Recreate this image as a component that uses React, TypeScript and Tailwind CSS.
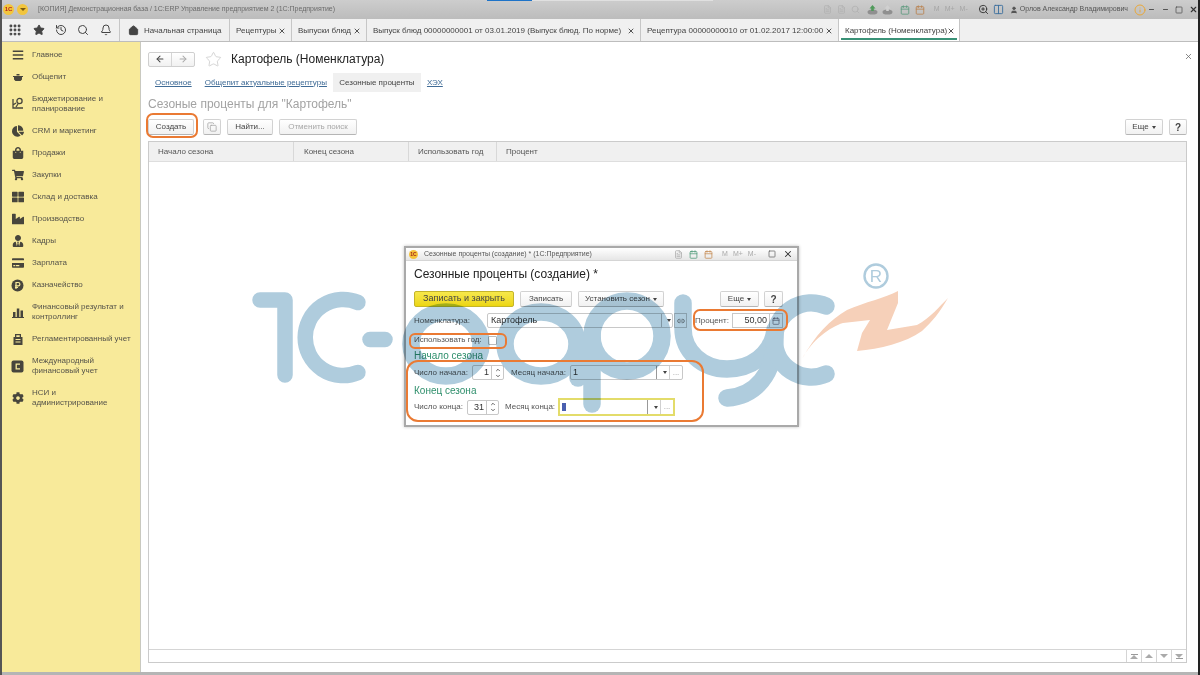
import { ReactNode } from 'react';
import { Bell, Calendar, ChevronDown, ChevronUp, Copy, FileText, History, House, Link2, Minus, Search, Square, Star, X, ArrowLeft, ArrowRight, Grip, Info, User, ZoomIn, Columns2 } from 'lucide-react';
import { FaBars, FaChartPie, FaCog, FaCreditCard, FaIndustry, FaShoppingBag, FaShoppingCart, FaThLarge, FaUserTie } from 'react-icons/fa';

const PotIcon = () => (
    <svg width="12" height="12" viewBox="0 0 12 12" fill="currentColor">
        <path d="M1 5h10v1H10v2.5L8.5 10h-5L2 8.5V6H1z" />
        <rect x="4.5" y="3" width="3" height="1.5" />
    </svg>
);

const BudgetIcon = () => (
    <svg width="14" height="14" viewBox="0 0 14 14" fill="none" stroke="currentColor" strokeWidth="1.3">
        <path d="M2 2v9h10M2 8l3-2" />
        <circle cx="8.5" cy="4" r="2.6" />
        <path d="M5 10l2-3" />
    </svg>
);

const RubleIcon = () => (
    <svg width="13" height="13" viewBox="0 0 13 13">
        <circle cx="6.5" cy="6.5" r="6" fill="currentColor" />
        <path d="M5 10V3.5h2.2a1.6 1.6 0 010 3.4H4M4 8.5h3" fill="none" stroke="#f8ea9a" strokeWidth="1.2" />
    </svg>
);

const BarsIcon = () => (
    <svg width="12" height="12" viewBox="0 0 12 12" fill="currentColor">
        <rect x="1" y="6" width="2.5" height="5" />
        <rect x="4.8" y="2.5" width="2.5" height="8.5" />
        <rect x="8.5" y="4.5" width="2.5" height="6.5" />
        <rect x="0" y="11" width="12" height="1" />
    </svg>
);

const ReportIcon = () => (
    <svg width="12" height="13" viewBox="0 0 12 13" fill="currentColor">
        <path d="M3 1h6v3h1.5v8h-9V4H3zM4.3 2.2V4h3.4V2.2z" fillRule="evenodd" />
        <rect x="3.5" y="6" width="5" height="1" fill="#f8ea9a" />
        <rect x="3.5" y="8.5" width="5" height="1" fill="#f8ea9a" />
    </svg>
);

const IntlIcon = () => (
    <svg width="13" height="13" viewBox="0 0 13 13">
        <rect x="0.5" y="0.5" width="12" height="12" rx="2" fill="currentColor" />
        <path d="M9 4.2H5.2v4.6H9" fill="none" stroke="#f8ea9a" strokeWidth="1.3" />
    </svg>
);

// серая горка с зелёной стрелкой, панель в заголовке
const TrayIcon = ({ arrow }: { arrow: string }) => (
    <svg width="11" height="11" viewBox="0 0 11 11">
        <ellipse cx="5.5" cy="8" rx="5" ry="2.6" fill="#8f8f8f" />
        <path d="M5.5 1L8.5 4.5H6.8V7H4.2V4.5H2.5z" fill={arrow} />
    </svg>
);

const menuItems: { label: ReactNode; icon: ReactNode; double?: boolean }[] = [
    { label: 'Главное', icon: <FaBars size={12} /> },
    { label: 'Общепит', icon: <PotIcon /> },
    { label: <>Бюджетирование и<br />планирование</>, icon: <BudgetIcon />, double: true },
    { label: 'CRM и маркетинг', icon: <FaChartPie size={12} /> },
    { label: 'Продажи', icon: <FaShoppingBag size={12} /> },
    { label: 'Закупки', icon: <FaShoppingCart size={12} /> },
    { label: 'Склад и доставка', icon: <FaThLarge size={12} /> },
    { label: 'Производство', icon: <FaIndustry size={12} /> },
    { label: 'Кадры', icon: <FaUserTie size={12} /> },
    { label: 'Зарплата', icon: <FaCreditCard size={12} /> },
    { label: 'Казначейство', icon: <RubleIcon /> },
    { label: <>Финансовый результат и<br />контроллинг</>, icon: <BarsIcon />, double: true },
    { label: 'Регламентированный учет', icon: <ReportIcon /> },
    { label: <>Международный<br />финансовый учет</>, icon: <IntlIcon />, double: true },
    { label: <>НСИ и<br />администрирование</>, icon: <FaCog size={12} />, double: true },
];

const Sidebar = () => (
    <aside className="w-[139px] ml-[2px] shrink-0 bg-[#f8ea9a] border-r border-[#c9c9c0] pt-[2px]">
        {menuItems.map((item, i) => (
            <div key={i} className={`flex items-center text-[#55534a] ${item.double ? 'h-[32px]' : 'h-[22px]'}`}>
                <span className="w-[30px] shrink-0 flex justify-center pl-px text-[#47453c]">{item.icon}</span>
                <span className="text-[8px] leading-[10.5px] whitespace-nowrap">{item.label}</span>
            </div>
        ))}
    </aside>
);

const Tab = ({ children, className, active }: { children: ReactNode; className: string; active?: boolean }) => (
    <div className={`h-full shrink-0 flex items-center justify-between pl-[6px] pr-[5px] pt-px border-r border-[#c6c6c6] text-[8px] text-[#444] relative whitespace-nowrap ${active ? 'bg-white' : ''} ${className}`}>
        {children}
        <X size={8} strokeWidth={3} className="text-[#555] shrink-0" />
        {active && <div className="absolute left-[2px] right-[2px] bottom-[1px] h-[2px] bg-[#3a9277]" />}
    </div>
);

const Btn = ({ children, className = '' }: { children: ReactNode; className?: string }) => (
    <div className={`h-[16px] shrink-0 flex items-center justify-center border border-[#d2d2d2] border-b-[#b5b5b5] rounded-[2px] bg-gradient-to-b from-white to-[#f1f1f1] text-[8px] text-[#444] whitespace-nowrap ${className}`}>
        {children}
    </div>
);

const Caret = () => <span className="inline-block ml-[3px] border-x-[2px] border-t-[3px] border-x-transparent border-t-[#444]" />;

const Label = ({ children, className = '' }: { children: ReactNode; className?: string }) => (
    <span className={`text-[8px] text-[#555] whitespace-nowrap shrink-0 ${className}`}>{children}</span>
);

const Spin = ({ value, className }: { value: string; className: string }) => (
    <div className={`h-[15px] flex border border-[#c8c8c8] rounded-[2px] bg-white shrink-0 ${className}`}>
        <span className="flex-1 text-right pr-[2px] text-[9px] leading-[13px] text-[#333]">{value}</span>
        <div className="w-[12px] border-l border-[#c8c8c8] flex flex-col items-center justify-center text-[#333]">
            <ChevronUp size={6} strokeWidth={3} />
            <ChevronDown size={6} strokeWidth={3} />
        </div>
    </div>
);

const MonthInput = ({ children, className }: { children?: ReactNode; className: string }) => (
    <div className={`flex items-center border shrink-0 ${className}`}>
        <span className="flex-1 pl-[2px] text-[9px] text-[#333] flex items-center">{children}</span>
        <span className="w-[13px] h-full border-l border-[#999] flex items-center justify-center"><Caret /></span>
        <span className="w-[13px] h-full border-l border-[#d0d0d0] text-[8px] leading-[13px] text-center text-[#999]">...</span>
    </div>
);

const SeasonDialog = () => (
    <div className="absolute left-[404px] top-[246px] w-[395px] h-[181px] border-2 border-[#a9a9a9] bg-white shadow-[0_0_3px_rgba(0,0,0,0.25)] z-10 flex flex-col">
        <div className="h-[13px] shrink-0 flex items-center bg-gradient-to-b from-[#ffffff] to-[#e6e6e6] border-b border-[#d5d5d5] text-[7px] text-[#555]">
            <span className="w-[9px] h-[9px] ml-[3px] rounded-full bg-[#f5c33b] text-[5px] leading-[9px] text-center font-bold text-[#a3261a]">1С</span>
            <span className="ml-[6px]">Сезонные проценты (создание) * (1С:Предприятие)</span>
            <div className="ml-auto flex items-center gap-[6px] pr-[4px] text-[#aaa]">
                <FileText size={9} />
                <Calendar size={9} className="text-[#4d9a78]" />
                <Calendar size={9} className="text-[#c48a52]" />
                <span className="text-[7px] w-[34px] ml-[3px] flex justify-between"><span>M</span><span>M+</span><span>M-</span></span>
                <Square size={8} className="ml-[6px] text-[#555]" strokeWidth={2} />
                <X size={10} className="ml-[1px] text-[#333]" strokeWidth={2.5} />
            </div>
        </div>
        <div className="px-[8px] flex-1">
            <h2 className="text-[12px] leading-[16px] mt-[5px] text-[#222] whitespace-nowrap">Сезонные проценты (создание) *</h2>
            <div className="flex gap-[6px] mt-[9px]">
                <div className="w-[100px] h-[16px] flex items-center justify-center rounded-[2px] border border-[#c4b52a] bg-gradient-to-b from-[#f7e84a] to-[#ecd60e] text-[9px] text-[#444]">Записать и закрыть</div>
                <Btn className="w-[52px]">Записать</Btn>
                <Btn className="w-[86px]">Установить сезон<Caret /></Btn>
                <Btn className="w-[39px] ml-auto mr-[-1px]">Еще<Caret /></Btn>
                <Btn className="w-[19px] mr-[6px] text-[10px] font-bold">?</Btn>
            </div>
            <div className="flex items-center h-[15px] mt-[6px]">
                <Label className="w-[73px]">Номенклатура:</Label>
                <div className="w-[186px] h-full flex items-center border border-[#c8c8c8] rounded-[2px] bg-white">
                    <span className="flex-1 pl-[3px] text-[9px] text-[#333]">Картофель</span>
                    <span className="w-[11px] h-full border-l border-[#bbb] flex items-center justify-center"><Caret /></span>
                </div>
                <div className="w-[13px] h-full ml-[1px] border border-[#c8c8c8] flex items-center justify-center text-[#555]"><Link2 size={8} /></div>
                <Label className="ml-[8px] w-[37px]">Процент:</Label>
                <div className="w-[51px] h-full flex items-center border border-[#c8c8c8] bg-white">
                    <span className="flex-1 text-right pr-[2px] text-[9px] text-[#333]">50,00</span>
                    <span className="w-[13px] h-full border-l border-[#c8c8c8] flex items-center justify-center text-[#667]"><Calendar size={8} /></span>
                </div>
            </div>
            <div className="flex items-center h-[10px] mt-[7px]">
                <Label className="w-[74px]">Использовать год:</Label>
                <span className="w-[9px] h-[9px] border border-[#bbb] rounded-[1px] bg-white" />
            </div>
            <div className="text-[10px] leading-[12px] text-[#2f8f6c] mt-[5px]">Начало сезона</div>
            <div className="flex items-center h-[15px] mt-[3px]">
                <Label className="w-[58px]">Число начала:</Label>
                <Spin value="1" className="w-[32px]" />
                <Label className="ml-[7px] w-[59px]">Месяц начала:</Label>
                <MonthInput className="w-[113px] h-full border-[#c8c8c8] rounded-[2px] bg-white">1</MonthInput>
            </div>
            <div className="text-[10px] leading-[12px] text-[#2f8f6c] mt-[5px]">Конец сезона</div>
            <div className="flex items-center h-[18px] mt-[1px]">
                <Label className="w-[53px]">Число конца:</Label>
                <Spin value="31" className="w-[32px]" />
                <Label className="ml-[6px] w-[53px]">Месяц конца:</Label>
                <MonthInput className="w-[117px] h-full border-[#e3dc6a] border-2 bg-white">
                    <span className="w-[4px] h-[8px] bg-[#4a5fb0]" />
                </MonthInput>
            </div>
        </div>
    </div>
);

// логотип поверх всего окна, как на записи экрана
const Watermark = () => (
    <svg className="absolute inset-0 z-20 pointer-events-none mix-blend-multiply" width="1200" height="675" viewBox="0 0 1200 675" fill="none">
        <g stroke="#afccdd" strokeWidth="15.5" strokeLinecap="round" strokeLinejoin="round">
            <path d="M260 300H285V375" />
            <path d="M358 302.5A38 38 0 1 0 358 372.5" />
            <path d="M370 339.5H385" />
        </g>
        <g stroke="#afccdd" strokeWidth="17.5" strokeLinecap="round" strokeLinejoin="round">
            <ellipse cx="446" cy="344" rx="35" ry="32" />
            <ellipse cx="541" cy="344" rx="36" ry="32" />
            <path d="M578 344V378" />
            <circle cx="627" cy="336" r="35" />
            <path d="M592 336V404" />
            <path d="M683 303V328C683 352 703 369 727 369C750 369 772 355 775 330" />
            <path d="M727 398C755 396 775 375 775 335" />
            <path d="M826 306A37 37 0 1 0 826 374" />
        </g>
        <circle cx="876" cy="276" r="11.5" stroke="#afccdd" strokeWidth="2.4" />
        <text x="876" y="282" textAnchor="middle" fontSize="17" fontFamily="Liberation Sans, sans-serif" fill="#afccdd">R</text>
        <path d="M802 359C815 335 830 320 847 310C865 302 885 298 898 291L898 303L887 330L917 325C930 318 940 306 948 298C940 312 932 322 922 331C905 343 880 349 857 351L862 333L870 320L843 323C830 327 812 340 802 359Z" fill="#f6d0b9" />
    </svg>
);

const Outlines = () => (
    <>
        <div className="absolute left-[146px] top-[113px] w-[52px] h-[25px] rounded-[7px] border-2 border-[#ea7a33] z-30" />
        <div className="absolute left-[693px] top-[309px] w-[95px] h-[22px] rounded-[7px] border-2 border-[#ea7a33] z-30" />
        <div className="absolute left-[409px] top-[333px] w-[98px] h-[16px] rounded-[6px] border-2 border-[#ea7a33] z-30" />
        <div className="absolute left-[406px] top-[360px] w-[298px] h-[62px] rounded-[12px] border-2 border-[#ea7a33] z-30" />
    </>
);

const Content = () => (
    <main className="flex-1 min-w-0 flex flex-col pl-[7px] pr-[13px] relative">
        <X size={9} className="absolute right-[7px] top-[10px] text-[#666]" />
        <div className="flex items-center h-[16px] mt-[9px]">
            <div className="w-[47px] h-[15px] flex border border-[#cfcfcf] rounded-[2px] bg-gradient-to-b from-white to-[#f1f1f1]">
                <span className="flex-1 flex items-center justify-center text-[#444] border-r border-[#d5d5d5]"><ArrowLeft size={10} strokeWidth={2.5} /></span>
                <span className="flex-1 flex items-center justify-center text-[#aaa]"><ArrowRight size={10} strokeWidth={2.5} /></span>
            </div>
            <Star size={17} strokeWidth={1} className="ml-[10px] text-[#c4c4c4]" />
            <h1 className="ml-[9px] text-[12px] text-[#222] whitespace-nowrap">Картофель (Номенклатура)</h1>
        </div>
        <div className="flex items-center h-[19px] mt-[6px] pl-[7px] text-[8px] whitespace-nowrap">
            <span className="text-[#3f6b96] underline">Основное</span>
            <span className="ml-[13px] text-[#3f6b96] underline">Общепит актуальные рецептуры</span>
            <span className="ml-[6px] w-[88px] h-full flex items-center justify-center bg-[#f0f0f0] text-[#444]">Сезонные проценты</span>
            <span className="ml-[6px] text-[#3f6b96] underline">ХЭХ</span>
        </div>
        <h2 className="text-[12px] leading-[14px] text-[#a3a3a3] mt-[5px] whitespace-nowrap">Сезоные проценты для "Картофель"</h2>
        <div className="flex items-center gap-[6px] mt-[8px]">
            <Btn className="w-[46px]">Создать</Btn>
            <Btn className="w-[18px] ml-[3px] text-[#aaa]"><Copy size={10} /></Btn>
            <Btn className="w-[46px]">Найти...</Btn>
            <Btn className="w-[78px] text-[#a8a8a8]">Отменить поиск</Btn>
            <Btn className="w-[38px] ml-auto">Еще<Caret /></Btn>
            <Btn className="w-[18px] text-[10px] font-bold">?</Btn>
        </div>
        <div className="flex-1 mt-[6px] mb-[9px] border border-[#cbcbcb] flex flex-col">
            <div className="h-[20px] shrink-0 flex bg-[#f0f0f0] border-b border-[#dedede] text-[8px] text-[#555] leading-[19px]">
                <span className="w-[145px] pl-[9px] border-r border-[#d8d8d8]">Начало сезона</span>
                <span className="w-[115px] pl-[10px] border-r border-[#d8d8d8]">Конец сезона</span>
                <span className="w-[88px] pl-[9px] border-r border-[#d8d8d8]">Использовать год</span>
                <span className="pl-[9px]">Процент</span>
            </div>
            <div className="flex-1" />
            <div className="h-[13px] shrink-0 border-t border-[#d5d5d5] flex justify-end text-[#9a9a9a]">
                {['first', 'up', 'down', 'last'].map(k => (
                    <span key={k} className="w-[15px] border-l border-[#d5d5d5] flex flex-col items-center justify-center">
                        {k === 'first' && <span className="w-[7px] h-px bg-[#9a9a9a]" />}
                        {(k === 'first' || k === 'up') && <span className="border-x-[4px] border-b-[4px] border-x-transparent border-b-[#aaa]" />}
                        {(k === 'down' || k === 'last') && <span className="border-x-[4px] border-t-[4px] border-x-transparent border-t-[#aaa]" />}
                        {k === 'last' && <span className="w-[7px] h-px bg-[#9a9a9a]" />}
                    </span>
                ))}
            </div>
        </div>
    </main>
);

const TopBar = () => (
    <div className="h-[19px] shrink-0 flex items-center bg-gradient-to-b from-[#cdcdcd] to-[#bcbcbc] text-[7px] text-[#6b6b6b] relative">
        <div className="absolute left-[487px] top-0 w-[45px] h-px bg-[#1e73c8]" />
        <div className="absolute left-[532px] top-0 w-[181px] h-px bg-[#e0e0e0]" />
        <span className="w-[11px] h-[11px] ml-[3px] rounded-full bg-[#f2c53d] text-[6px] leading-[11px] text-center font-bold text-[#b8281c]">1С</span>
        <span className="w-[11px] h-[11px] ml-[3px] rounded-full bg-[#f2c53d] flex items-center justify-center"><span className="border-x-[3px] border-t-[3px] border-x-transparent border-t-[#7a5a10]" /></span>
        <span className="ml-[10px] whitespace-nowrap">[КОПИЯ] Демонстрационная база / 1С:ERP Управление предприятием 2 (1С:Предприятие)</span>
        <div className="ml-auto flex items-center text-[#8a8a8a] pr-[2px]">
            <FileText size={9} className="text-[#b0b0b0]" />
            <FileText size={9} className="ml-[5px] text-[#b0b0b0]" />
            <Search size={9} className="ml-[5px] text-[#b0b0b0]" />
            <span className="ml-[7px]"><TrayIcon arrow="#4f9a5a" /></span>
            <span className="ml-[4px]"><TrayIcon arrow="#d0d0d0" /></span>
            <Calendar size={10} className="ml-[7px] text-[#5e9a7e]" />
            <Calendar size={10} className="ml-[5px] text-[#b9824f]" />
            <span className="ml-[9px] w-[34px] flex justify-between text-[7px] text-[#a5a5a5]"><span>M</span><span>M+</span><span>M-</span></span>
            <ZoomIn size={11} className="ml-[10px] text-[#333]" />
            <Columns2 size={11} className="ml-[4px] text-[#3b6f9e]" />
            <User size={8} fill="currentColor" className="ml-[6px] text-[#555]" />
            <span className="ml-[2px] whitespace-nowrap text-[#555]">Орлов Александр Владимирович</span>
            <Info size={12} className="ml-[6px] text-[#e9a83a]" />
            <Minus size={7} className="ml-[2px] text-[#444]" strokeWidth={3} />
            <Minus size={7} className="ml-[7px] text-[#444]" strokeWidth={3} />
            <Square size={8} className="ml-[6px] text-[#444]" strokeWidth={2} />
            <X size={9} className="ml-[6px] text-[#333]" strokeWidth={3} />
        </div>
    </div>
);

const TabsRow = () => (
    <div className="h-[23px] shrink-0 flex bg-[#f0f0f0] border-b border-[#bdbdbd]">
        <div className="w-[120px] shrink-0 flex items-center justify-around pl-[3px] pr-[2px] border-r border-[#c6c6c6] text-[#444]">
            <Grip size={14} strokeWidth={3} />
            <Star size={12} fill="currentColor" />
            <History size={12} />
            <Search size={12} />
            <Bell size={12} />
        </div>
        <div className="w-[110px] shrink-0 h-full flex items-center gap-[5px] pl-[8px] pt-px border-r border-[#c6c6c6] text-[8px] text-[#444] whitespace-nowrap">
            <House size={11} fill="currentColor" />
            Начальная страница
        </div>
        <Tab className="w-[62px]">Рецептуры</Tab>
        <Tab className="w-[75px]">Выпуски блюд</Tab>
        <Tab className="w-[274px]">Выпуск блюд 00000000001 от 03.01.2019 (Выпуск блюд. По норме)</Tab>
        <Tab className="w-[198px]">Рецептура 00000000010 от 01.02.2017 12:00:00</Tab>
        <Tab className="w-[121px]" active>Картофель (Номенклатура)</Tab>
    </div>
);

export default function App() {
    return (
        <div className="w-[1200px] h-[675px] relative overflow-hidden bg-white flex flex-col font-['Liberation_Sans',Arial,sans-serif] blur-[0.4px]">
            <TopBar />
            <TabsRow />
            <div className="flex-1 min-h-0 flex">
                <Sidebar />
                <Content />
            </div>
            <div className="h-[3px] shrink-0 bg-[#b5b5b5]" />
            <SeasonDialog />
            <Watermark />
            <Outlines />
            <div className="absolute left-0 top-0 bottom-0 w-[2px] bg-[#555] z-40" />
            <div className="absolute right-0 top-0 bottom-0 w-[2px] bg-[#222] z-40" />
        </div>
    );
}
